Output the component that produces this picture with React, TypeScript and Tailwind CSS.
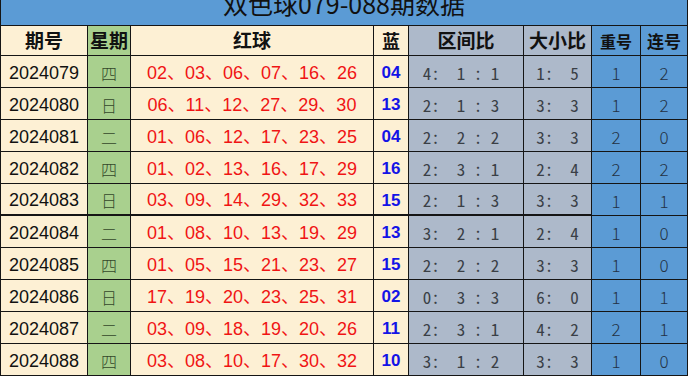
const rows = [
  { qh: '2024079', xq: '四', red: '02、03、06、07、16、26', blue: '04', qj: '4:  1 : 1', dx: '1:  5', ch: '1', lh: '2' },
  { qh: '2024080', xq: '日', red: '06、11、12、27、29、30', blue: '13', qj: '2:  1 : 3', dx: '3:  3', ch: '1', lh: '2' },
  { qh: '2024081', xq: '二', red: '01、06、12、17、23、25', blue: '04', qj: '2:  2 : 2', dx: '3:  3', ch: '2', lh: '0' },
  { qh: '2024082', xq: '四', red: '01、02、13、16、17、29', blue: '16', qj: '2:  3 : 1', dx: '2:  4', ch: '2', lh: '2' },
  { qh: '2024083', xq: '日', red: '03、09、14、29、32、33', blue: '15', qj: '2:  1 : 3', dx: '3:  3', ch: '1', lh: '1' },
  { qh: '2024084', xq: '二', red: '01、08、10、13、19、29', blue: '13', qj: '3:  2 : 1', dx: '2:  4', ch: '1', lh: '0' },
  { qh: '2024085', xq: '四', red: '01、05、15、21、23、27', blue: '15', qj: '2:  2 : 2', dx: '3:  3', ch: '1', lh: '0' },
  { qh: '2024086', xq: '日', red: '17、19、20、23、25、31', blue: '02', qj: '0:  3 : 3', dx: '6:  0', ch: '1', lh: '1' },
  { qh: '2024087', xq: '二', red: '03、09、18、19、20、26', blue: '11', qj: '2:  3 : 1', dx: '4:  2', ch: '2', lh: '1' },
  { qh: '2024088', xq: '四', red: '03、08、10、17、30、32', blue: '10', qj: '3:  1 : 2', dx: '3:  3', ch: '1', lh: '0' },
]

const sans = "font-['Liberation_Sans','Noto_Sans_CJK_SC',sans-serif]"
const cjk = "font-['Noto_Sans_CJK_SC',sans-serif]"
const mono = "font-['Noto_Sans_Mono_CJK_SC','Liberation_Mono',monospace]"

function Cell({ className = '', children }: { className?: string; children: React.ReactNode }) {
  return <div className={`flex items-center justify-center overflow-hidden whitespace-pre ${className}`}>{children}</div>
}

export default function App() {
  return (
    <div className="w-[689px] h-[376px] bg-white">
      <div className="grid w-[688px] grid-cols-[86px_42px_242px_34px_114px_67px_48px_46px] grid-rows-[25px_29px_repeat(10,31px)] gap-px bg-[#151515] px-px pb-px">
        {/* title row is clipped at the top in the source sheet */}
        <div className={`col-span-8 overflow-hidden bg-[#5b9bd5] text-center text-[25px] leading-[6px] text-[#111] ${cjk}`}>
          双色球079-088期数据
        </div>

        <Cell className={`bg-[#fdf0d4] text-[19px] font-bold text-[#111] ${cjk}`}>期号</Cell>
        <Cell className={`bg-[#a9d08e] text-[19px] font-bold text-[#111] ${cjk}`}>星期</Cell>
        <Cell className={`bg-[#fdf0d4] text-[19px] font-bold text-[#111] ${cjk}`}>红球</Cell>
        <Cell className={`bg-[#fdf0d4] text-[18px] font-bold text-[#111] ${cjk}`}>蓝</Cell>
        <Cell className={`bg-[#adb9ca] text-[19px] font-bold text-[#111] ${cjk}`}>区间比</Cell>
        <Cell className={`bg-[#adb9ca] text-[19px] font-bold text-[#111] ${cjk}`}>大小比</Cell>
        <Cell className={`bg-[#5b9bd5] text-[16px] font-bold text-[#111] ${cjk}`}>重号</Cell>
        <Cell className={`bg-[#5b9bd5] text-[17px] font-bold text-[#111] ${cjk}`}>连号</Cell>

        {rows.map((r, i) => {
          // heavier rule under 2024083, stops before 重号
          const thick = i === 4 ? 'border-b border-[#151515]' : ''
          return [
            <Cell key={`${r.qh}-a`} className={`bg-[#fdf0d4] pt-[3px] text-[18px] text-[#111] ${sans} ${thick}`}>{r.qh}</Cell>,
            <Cell key={`${r.qh}-b`} className={`bg-[#a9d08e] pt-[2px] text-[16px] font-light text-[#33472a] ${cjk} ${thick}`}>{r.xq}</Cell>,
            <Cell key={`${r.qh}-c`} className={`bg-[#fdf0d4] pt-[3px] text-[18px] text-[#f01414] ${sans} ${thick}`}>{r.red}</Cell>,
            <Cell key={`${r.qh}-d`} className={`bg-[#fdf0d4] pt-[3px] text-[17px] font-bold text-[#1414e6] ${sans} ${thick}`}>{r.blue}</Cell>,
            <Cell key={`${r.qh}-e`} className={`bg-[#adb9ca] pt-[2px] pr-[10px] text-[17px] text-[#3a3f46] ${mono} ${thick}`}>{r.qj}</Cell>,
            <Cell key={`${r.qh}-f`} className={`bg-[#adb9ca] pt-[2px] text-[17px] text-[#3a3f46] ${mono} ${thick}`}>{r.dx}</Cell>,
            <Cell key={`${r.qh}-g`} className={`bg-[#5b9bd5] pt-[2px] text-[17px] font-light text-[#233244] ${cjk}`}>{r.ch}</Cell>,
            <Cell key={`${r.qh}-h`} className={`bg-[#5b9bd5] pt-[2px] text-[17px] font-light text-[#233244] ${cjk}`}>{r.lh}</Cell>,
          ]
        })}
      </div>
    </div>
  )
}
